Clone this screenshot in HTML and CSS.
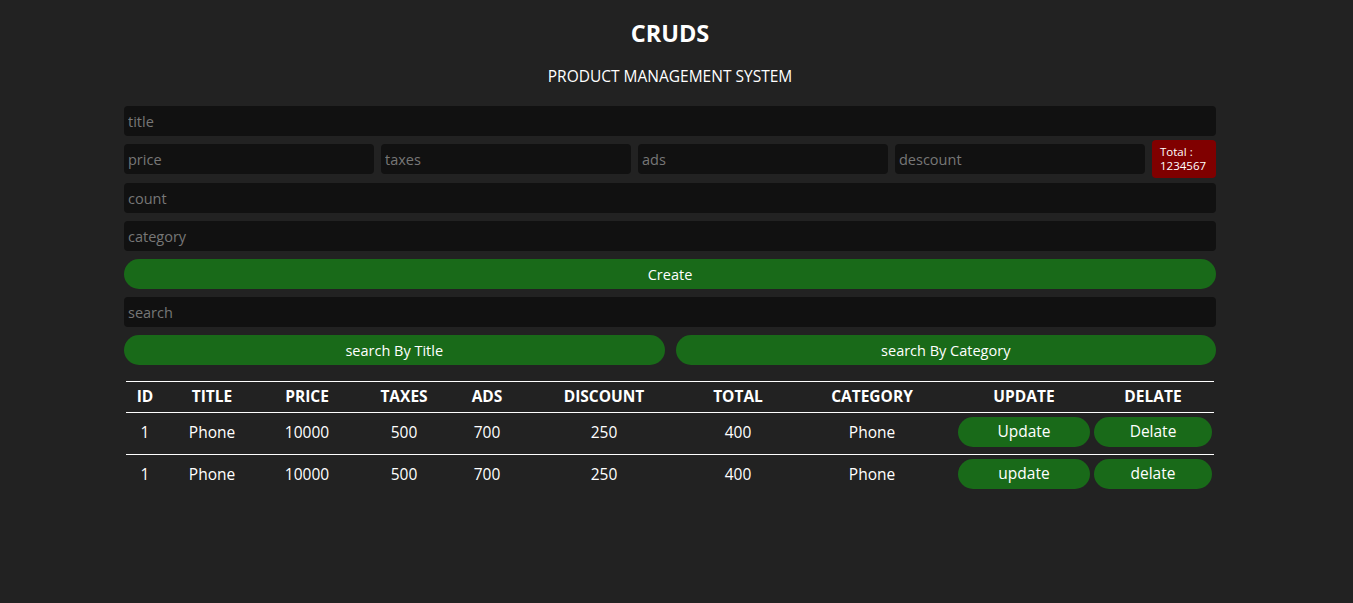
FILE: index.html
```html
<!DOCTYPE html>
<html lang="en">
<head>
<meta charset="utf-8">
<title>CRUDS</title>
<link rel="stylesheet" href="styles.css">
</head>
<body>
<div class="page">
  <header class="head">
    <h2 class="title">CRUDS</h2>
    <p class="subtitle">PRODUCT MANAGEMENT SYSTEM</p>
  </header>
  <div class="inputs">
    <input class="field" type="text" placeholder="title">
    <div class="price-row">
      <input class="field" type="number" placeholder="price">
      <input class="field" type="number" placeholder="taxes">
      <input class="field" type="number" placeholder="ads">
      <input class="field" type="number" placeholder="descount">
      <small class="total">Total :<br>1234567</small>
    </div>
    <input class="field" type="number" placeholder="count">
    <input class="field" type="text" placeholder="category">
    <button class="btn">Create</button>
  </div>
  <div class="search-block">
    <input class="field" type="text" placeholder="search">
    <div class="search-btns">
      <button class="btn">search By Title</button>
      <button class="btn">search By Category</button>
    </div>
  </div>
  <div class="outputs">
    <table class="table">
      <colgroup>
        <col class="c-id"><col class="c-title"><col class="c-price"><col class="c-taxes"><col class="c-ads">
        <col class="c-disc"><col class="c-total"><col class="c-cat"><col class="c-upd"><col class="c-del">
      </colgroup>
      <thead>
        <tr>
          <th>ID</th><th>TITLE</th><th>PRICE</th><th>TAXES</th><th>ADS</th>
          <th>DISCOUNT</th><th>TOTAL</th><th>CATEGORY</th><th>UPDATE</th><th>DELATE</th>
        </tr>
      </thead>
      <tbody>
        <tr>
          <td>1</td><td>Phone</td><td>10000</td><td>500</td><td>700</td>
          <td>250</td><td>400</td><td>Phone</td>
          <td><button class="btn btn-row">Update</button></td>
          <td><button class="btn btn-row">Delate</button></td>
        </tr>
        <tr>
          <td>1</td><td>Phone</td><td>10000</td><td>500</td><td>700</td>
          <td>250</td><td>400</td><td>Phone</td>
          <td><button class="btn btn-row">update</button></td>
          <td><button class="btn btn-row">delate</button></td>
        </tr>
      </tbody>
    </table>
  </div>
</div>
</body>
</html>
```

FILE: styles.css
```css
* { box-sizing: border-box; }

html, body {
  background: #222222;
}

body {
  margin: 0;
  padding-right: 13px;
  color: #ffffff;
  font-family: "Open Sans", "Noto Sans", sans-serif;
}

.page {
  width: 1092px;
  margin: 0 auto;
}

.head {
  text-align: center;
  padding-top: 18px;
}

.title {
  margin: 0;
  font-size: 23.5px;
  line-height: 30px;
  font-weight: 700;
}

.subtitle {
  margin: 18px 0 0;
  font-size: 15.5px;
  line-height: 20px;
}

.inputs {
  margin-top: 20px;
  display: flex;
  flex-direction: column;
  gap: 8px;
}

.field {
  display: block;
  width: 100%;
  height: 30px;
  border: none;
  outline: none;
  border-radius: 4px;
  background: #111111;
  color: #eeeeee;
  padding: 0 4px;
  font-family: inherit;
  font-size: 14.5px;
}

.field::placeholder {
  color: #777777;
}

.price-row {
  display: flex;
  align-items: center;
  gap: 7px;
  height: 30px;
  margin-bottom: 1px;
}

.price-row .field {
  width: 250px;
  flex: none;
}

.total {
  flex: none;
  width: 64px;
  height: 38px;
  padding: 5px 8px;
  border-radius: 4px;
  background: #800000;
  color: #ffffff;
  font-size: 11.5px;
  line-height: 14px;
}

.btn {
  display: block;
  width: 100%;
  height: 30px;
  border: none;
  border-radius: 15px;
  background: #196a19;
  color: #ffffff;
  font-family: inherit;
  font-size: 14.5px;
  cursor: pointer;
}

.search-block {
  margin-top: 8px;
  display: flex;
  flex-direction: column;
  gap: 8px;
}

.search-btns {
  display: flex;
  gap: 11px;
}

.search-btns .btn {
  flex: 1;
}

.outputs {
  margin-top: 16px;
}

.table {
  width: 1088px;
  margin: 0 auto;
  table-layout: fixed;
  border-collapse: collapse;
  text-align: center;
  font-size: 15.5px;
}

.c-id { width: 38px; }
.c-title { width: 96px; }
.c-price { width: 94px; }
.c-taxes { width: 100px; }
.c-ads { width: 66px; }
.c-disc { width: 168px; }
.c-total { width: 100px; }
.c-cat { width: 168px; }
.c-upd { width: 136px; }
.c-del { width: 122px; }

.table thead tr {
  border-top: 1px solid #ffffff;
  border-bottom: 1px solid #ffffff;
}

.table th {
  height: 31px;
  font-weight: 700;
  padding: 0 0 3px;
  line-height: 20px;
}

.table tbody tr {
  height: 42px;
}

.table tbody tr + tr {
  border-top: 1px solid #ffffff;
}

.table td {
  padding: 0 2px 4px;
  line-height: 20px;
}

.btn-row {
  height: 30px;
  font-size: 15.5px;
  padding-bottom: 2px;
}
```
